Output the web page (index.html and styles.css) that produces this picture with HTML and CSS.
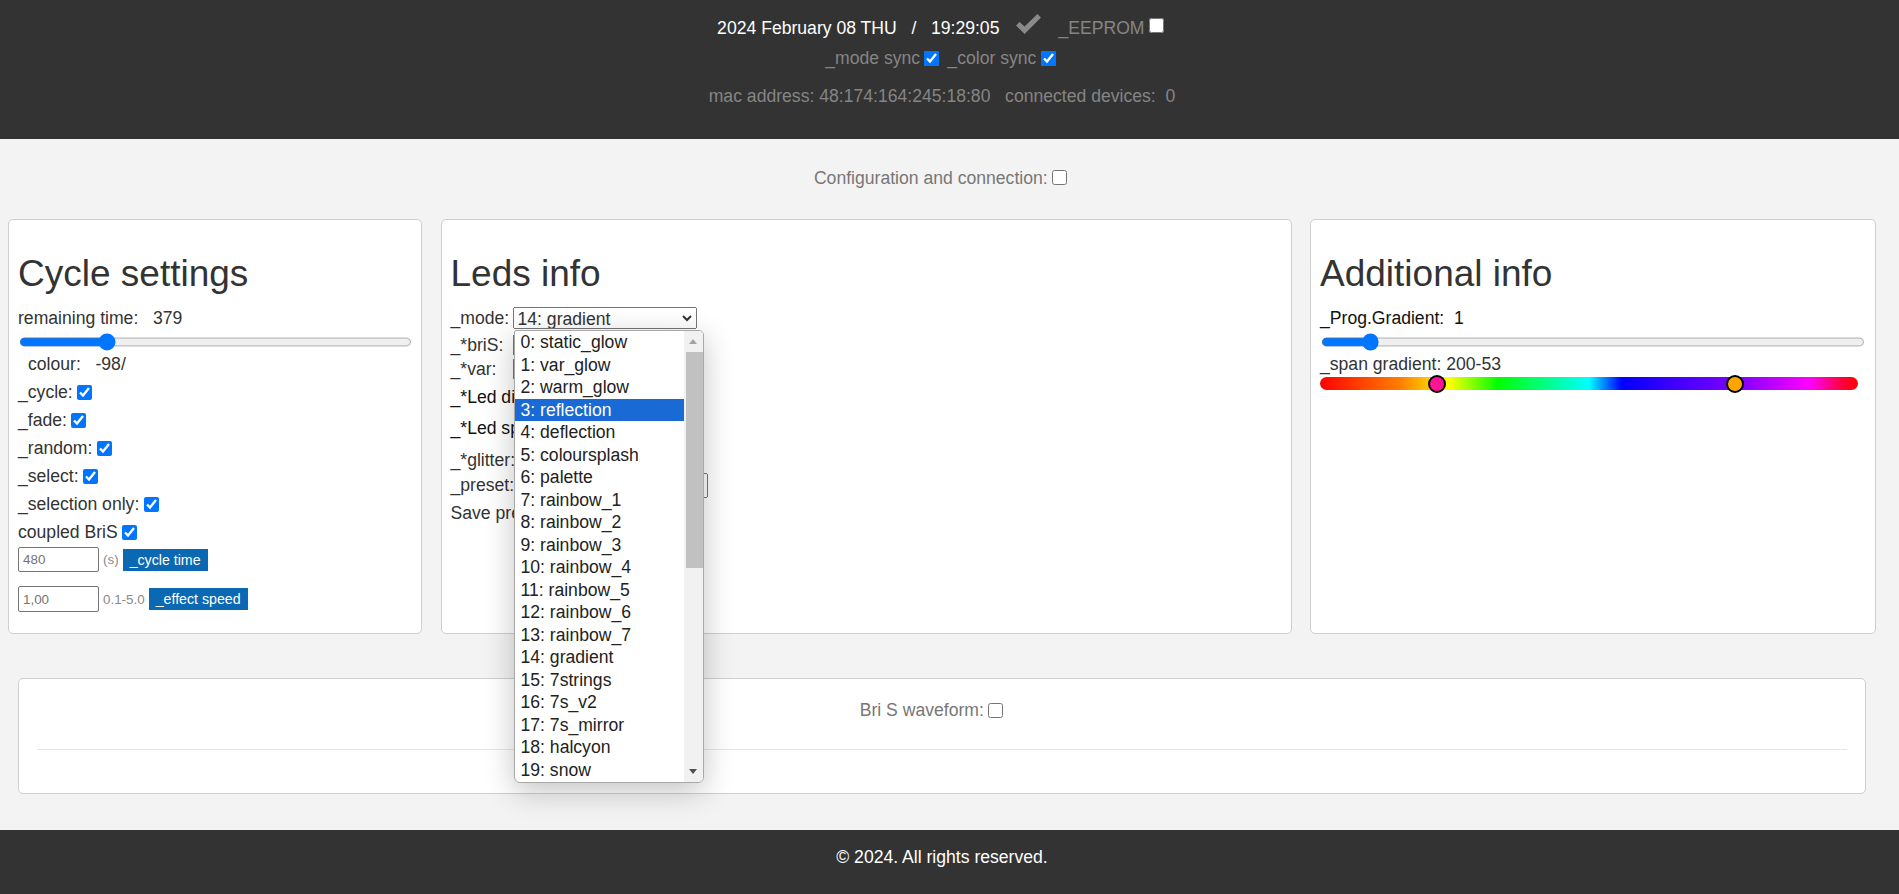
FILE: index.html
```html
<!DOCTYPE html>
<html lang="en">
<head>
<meta charset="utf-8">
<title>LED controller</title>
<link rel="stylesheet" href="styles.css">
</head>
<body>
<header class="topbar">
  <div class="topbar-line line-date">
    <span class="date-text">2024 February 08 THU&nbsp;&nbsp;&nbsp;/&nbsp;&nbsp;&nbsp;19:29:05</span>
    <svg class="tick" viewBox="0 0 25 20" width="25" height="20"><path d="M0 11.5 L3.6 8 L8.6 12.6 L21.4 0 L25 3.6 L8.6 20 Z" fill="#8a8a8a"/></svg>
    <span class="muted">_EEPROM</span><input type="checkbox" class="cb">
  </div>
  <div class="topbar-line line-sync">
    <span>_mode sync</span><input type="checkbox" class="cb" checked><span>&nbsp;_color sync</span><input type="checkbox" class="cb" checked>
  </div>
  <div class="topbar-line line-mac">
    <span>mac address: 48:174:164:245:18:80&nbsp;&nbsp;&nbsp;connected devices:&nbsp;&nbsp;0</span>
  </div>
</header>

<div class="config"><span>Configuration and connection:</span><input type="checkbox" class="cb"></div>

<main class="main">
  <div class="cards">
    <section class="card">
      <h2 class="card-title">Cycle settings</h2>
      <div class="stat">remaining time:&nbsp;&nbsp;&nbsp;379</div>
      <div class="slider-wrap"><input type="range" class="slider slider-cycle" min="0" max="480" value="101"></div>
      <div class="stat stat-colour">colour:&nbsp;&nbsp;&nbsp;-98/</div>
      <div class="checks">
        <label class="check-row">_cycle:<input type="checkbox" class="cb" checked></label>
        <label class="check-row">_fade:<input type="checkbox" class="cb" checked></label>
        <label class="check-row">_random:<input type="checkbox" class="cb" checked></label>
        <label class="check-row">_select:<input type="checkbox" class="cb" checked></label>
        <label class="check-row">_selection only:<input type="checkbox" class="cb" checked></label>
        <label class="check-row">coupled BriS<input type="checkbox" class="cb" checked></label>
      </div>
      <div class="field-row field-row-a">
        <input class="num" type="text" placeholder="480"><span class="unit">(s)</span><button class="btn">_cycle time</button>
      </div>
      <div class="field-row field-row-b">
        <input class="num" type="text" placeholder="1,00"><span class="unit">0.1-5.0</span><button class="btn">_effect speed</button>
      </div>
    </section>

    <section class="card card-leds">
      <h2 class="card-title">Leds info</h2>
      <div class="ctl-row row-mode"><span class="ctl-label">_mode:</span><select class="sel-mode"><option>14: gradient</option></select></div>
      <div class="ctl-row row-bris"><span class="ctl-label">_*briS:</span><select class="sel sel-bris"><option>200</option></select></div>
      <div class="ctl-row row-var"><span class="ctl-label">_*var:</span><select class="sel sel-var"><option>0</option></select></div>
      <div class="ctl-row row-dir dark">_*Led direction:</div>
      <div class="ctl-row row-speed dark">_*Led speed:</div>
      <div class="ctl-row row-glitter">_*glitter:</div>
      <div class="ctl-row row-preset"><span class="preset-label">_preset:</span><select class="sel sel-preset"><option>1</option></select></div>
      <div class="ctl-row row-save">Save preset:</div>

      <div class="mode-list">
        <div class="mode-items">
          <div class="mode-item">0: static_glow</div>
          <div class="mode-item">1: var_glow</div>
          <div class="mode-item">2: warm_glow</div>
          <div class="mode-item is-selected">3: reflection</div>
          <div class="mode-item">4: deflection</div>
          <div class="mode-item">5: coloursplash</div>
          <div class="mode-item">6: palette</div>
          <div class="mode-item">7: rainbow_1</div>
          <div class="mode-item">8: rainbow_2</div>
          <div class="mode-item">9: rainbow_3</div>
          <div class="mode-item">10: rainbow_4</div>
          <div class="mode-item">11: rainbow_5</div>
          <div class="mode-item">12: rainbow_6</div>
          <div class="mode-item">13: rainbow_7</div>
          <div class="mode-item">14: gradient</div>
          <div class="mode-item">15: 7strings</div>
          <div class="mode-item">16: 7s_v2</div>
          <div class="mode-item">17: 7s_mirror</div>
          <div class="mode-item">18: halcyon</div>
          <div class="mode-item">19: snow</div>
        </div>
        <div class="mode-scroll">
          <div class="sb-btn"><span class="arrow-up"></span></div>
          <div class="sb-thumb"></div>
          <div class="sb-space"></div>
          <div class="sb-btn"><span class="arrow-down"></span></div>
        </div>
      </div>
    </section>

    <section class="card">
      <h2 class="card-title">Additional info</h2>
      <div class="stat dark">_Prog.Gradient:&nbsp;&nbsp;1</div>
      <div class="slider-wrap"><input type="range" class="slider slider-prog" min="0" max="13" value="1"></div>
      <div class="stat">_span gradient: 200-53</div>
      <div class="spectrum">
        <span class="knob knob-pink" style="left:108px"></span>
        <span class="knob knob-orange" style="left:406px"></span>
      </div>
    </section>
  </div>

  <section class="wave-panel">
    <div class="wave-head"><span>Bri S waveform:</span><input type="checkbox" class="cb"></div>
    <hr class="wave-rule">
  </section>
</main>

<footer class="footer">© 2024. All rights reserved.</footer>
</body>
</html>
```

FILE: styles.css
```css
* { box-sizing: border-box; }
html, body { margin: 0; padding: 0; }
body {
  background: #f3f3f3;
  font-family: "Liberation Sans", Arial, sans-serif;
  font-size: 17.6px;
  color: #333;
}

.cb {
  width: 15px;
  height: 15px;
  margin: 3px 3px 3px 4.4px;
  flex: none;
}

/* header */
.topbar {
  background: #333;
  height: 139px;
  padding: 17px 15px 0 0;
}
.topbar-line {
  display: flex;
  justify-content: center;
  align-items: center;
  height: 22px;
  line-height: 22px;
  white-space: nowrap;
}
.line-date { color: #fff; }
.line-date .cb { margin-top: -2px; }
.tick { margin: -9px 17px 0 17px; }
.muted { color: #858585; }
.line-sync { margin-top: 8px; color: #858585; }
.line-mac { margin-top: 16px; color: #858585; }

/* config */
.config {
  height: 80px;
  padding: 28px 15px 0 0;
  display: flex;
  justify-content: center;
  align-items: flex-start;
  line-height: 22px;
  color: #777;
}
.config .cb { margin-top: 3px; }

/* cards */
.main { padding: 0 23px 0 8px; }
.cards {
  display: grid;
  grid-template-columns: 414px 851px 566px;
  column-gap: 18.5px;
  height: 415px;
}
.card {
  position: relative;
  background: #fff;
  border: 1px solid #cfcfcf;
  border-radius: 5px;
  padding: 33px 9px 0;
}
.card-title {
  margin: 0;
  font-size: 37px;
  line-height: 42px;
  font-weight: normal;
  color: #333;
}
.stat {
  margin-top: 3px;
  height: 20px;
  line-height: 20px;
  white-space: nowrap;
}
.card-title + .stat { margin-top: 13px; }
.stat-colour { padding-left: 10px; }
.dark { color: #111; }

.slider-wrap {
  margin-top: 5px;
  height: 18px;
  display: flex;
  align-items: center;
}
.slider { zoom: 1.1; height: 16px; margin: 0 0 0 1px; padding: 0; }
.slider-cycle { width: 357.3px; }
.slider-prog { width: 494.5px; }

.checks { margin-top: 4px; }
.check-row {
  display: flex;
  align-items: center;
  height: 28px;
  white-space: nowrap;
}

.field-row {
  display: flex;
  align-items: center;
  gap: 4px;
}
.field-row-a { margin-top: 1px; height: 25px; }
.field-row-b { margin-top: 14px; height: 26px; }
.num {
  width: 81px;
  height: 100%;
  border: 1px solid #767676;
  border-radius: 2px;
  padding: 0 4px;
  font-family: "Liberation Sans", Arial, sans-serif;
  font-size: 13.4px;
  color: #333;
  background: #fff;
}
.num::placeholder { color: #757575; }
.unit { font-size: 13.4px; color: #8a8a8a; }
.btn {
  height: 22px;
  padding: 0 7px;
  border: 0;
  background: #0b69b4;
  color: #fff;
  font-family: "Liberation Sans", Arial, sans-serif;
  font-size: 14.2px;
}

/* leds card */
.ctl-row {
  display: flex;
  align-items: center;
  height: 22px;
  white-space: nowrap;
}
.ctl-label { width: 62px; flex: none; }
.row-mode { margin-top: 12px; }
.row-bris { margin-top: 5px; }
.row-var { margin-top: 2px; }
.row-dir { margin-top: 6px; }
.row-speed { margin-top: 9px; }
.row-glitter { margin-top: 10px; }
.row-preset { margin-top: 2px; height: 25px; }
.row-save { margin-top: 4px; }
.preset-label { margin-right: 4px; }

.sel-mode {
  zoom: 1.1;
  width: 168px;
  height: 20px;
  font-family: "Liberation Sans", Arial, sans-serif;
  font-size: 16px;
  color: #333;
  margin: 0;
}
.sel {
  height: 22px;
  font-family: "Liberation Sans", Arial, sans-serif;
  font-size: 17.6px;
  margin: 0;
}
.sel-bris { width: 150px; }
.sel-var { width: 191px; }
.sel-preset { height: 25px; width: 190px; }

.mode-list {
  position: absolute;
  left: 72px;
  top: 110px;
  width: 190px;
  height: 453px;
  display: flex;
  background: #fff;
  border: 1px solid #a8a8a8;
  border-radius: 2px 5px 6px 6px;
  box-shadow: 0 8px 30px rgba(0, 0, 0, 0.24);
  overflow: hidden;
  z-index: 10;
}
.mode-items { flex: 1; }
.mode-item {
  height: 22.5px;
  line-height: 22.5px;
  padding-left: 6px;
  color: #222;
  white-space: nowrap;
}
.mode-item.is-selected { background: #1a6ad5; color: #fff; }
.mode-scroll {
  width: 19px;
  flex: none;
  background: #f1f1f1;
  display: flex;
  flex-direction: column;
}
.sb-btn {
  height: 21px;
  display: flex;
  justify-content: center;
  align-items: center;
}
.arrow-up {
  width: 0; height: 0;
  border-left: 4px solid transparent;
  border-right: 4px solid transparent;
  border-bottom: 5px solid #a3a3a3;
}
.arrow-down {
  width: 0; height: 0;
  border-left: 4px solid transparent;
  border-right: 4px solid transparent;
  border-top: 5px solid #505050;
}
.sb-thumb {
  height: 216px;
  margin: 0 0 0 2px;
  background: #c1c1c1;
}
.sb-space { flex: 1; }

/* spectrum */
.spectrum {
  position: relative;
  margin-top: 3px;
  width: 538px;
  height: 13px;
  border-radius: 7px;
  background: linear-gradient(90deg,
    #ff0000 0%, #ff8000 15%, #ffff00 24%, #00ff00 33%, #00ff88 42%,
    #00ffff 50%, #0000ff 56%, #4000ff 66%, #8000ff 78%, #ff00ff 91%,
    #ff0040 97%, #ff0000 100%);
}
.knob {
  position: absolute;
  top: -2.5px;
  width: 18px;
  height: 18px;
  border-radius: 50%;
  border: 2px solid #000;
}
.knob-pink { background: #ff1493; }
.knob-orange { background: #ffa500; }

/* waveform panel */
.wave-panel {
  margin: 44px 10px 0;
  height: 116px;
  background: #fff;
  border: 1px solid #cfcfcf;
  border-radius: 5px;
  padding-top: 20px;
}
.wave-head {
  display: flex;
  justify-content: center;
  align-items: center;
  height: 22px;
  line-height: 22px;
  padding-right: 18px;
  color: #777;
}
.wave-rule {
  margin: 28px 18px 0;
  border: 0;
  border-top: 1px solid #e6e6e6;
  height: 0;
}

/* footer */
.footer {
  margin-top: 36px;
  height: 64px;
  background: #333;
  color: #fff;
  text-align: center;
  padding: 16px 15px 0 0;
  line-height: 22px;
}
```
